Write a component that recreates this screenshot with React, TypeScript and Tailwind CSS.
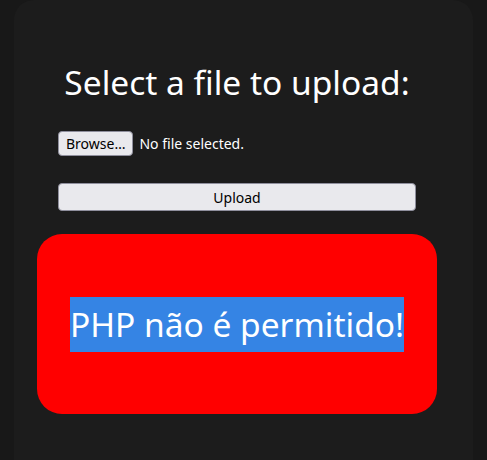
export default function App() {
  return (
    <div
      className="h-[460px] overflow-hidden bg-[#181818] px-[14px]"
      style={{ fontFamily: '"Noto Sans", sans-serif' }}
    >
      <div className="h-[480px] rounded-[20px] bg-[#1c1c1c] pt-[62px]">
        <div className="ml-[44px] w-[358px]">
          <h1 className="text-center text-[33.5px] leading-[40px] text-white">
            Select a file to upload:
          </h1>
          <div className="mt-[29px] flex items-center gap-[6px]">
            <button className="h-[25px] rounded-[4px] border border-[#8f8f9d] bg-[#e9e9ed] px-[7px] text-[14px] text-black">
              Browse…
            </button>
            <span className="text-[14px] text-white">No file selected.</span>
          </div>
          <button className="mt-[27px] h-[28px] w-[358px] rounded-[4px] border border-[#8f8f9d] bg-[#e9e9ed] text-[14px] text-black">
            Upload
          </button>
        </div>
        <div className="ml-[23px] mt-[23px] flex h-[180px] w-[400px] items-center justify-center rounded-[25px] bg-[#ff0000]">
          <span className="bg-[#3584e4] text-[33.5px] leading-[55px] text-white">
            PHP não é permitido!
          </span>
        </div>
      </div>
    </div>
  );
}
